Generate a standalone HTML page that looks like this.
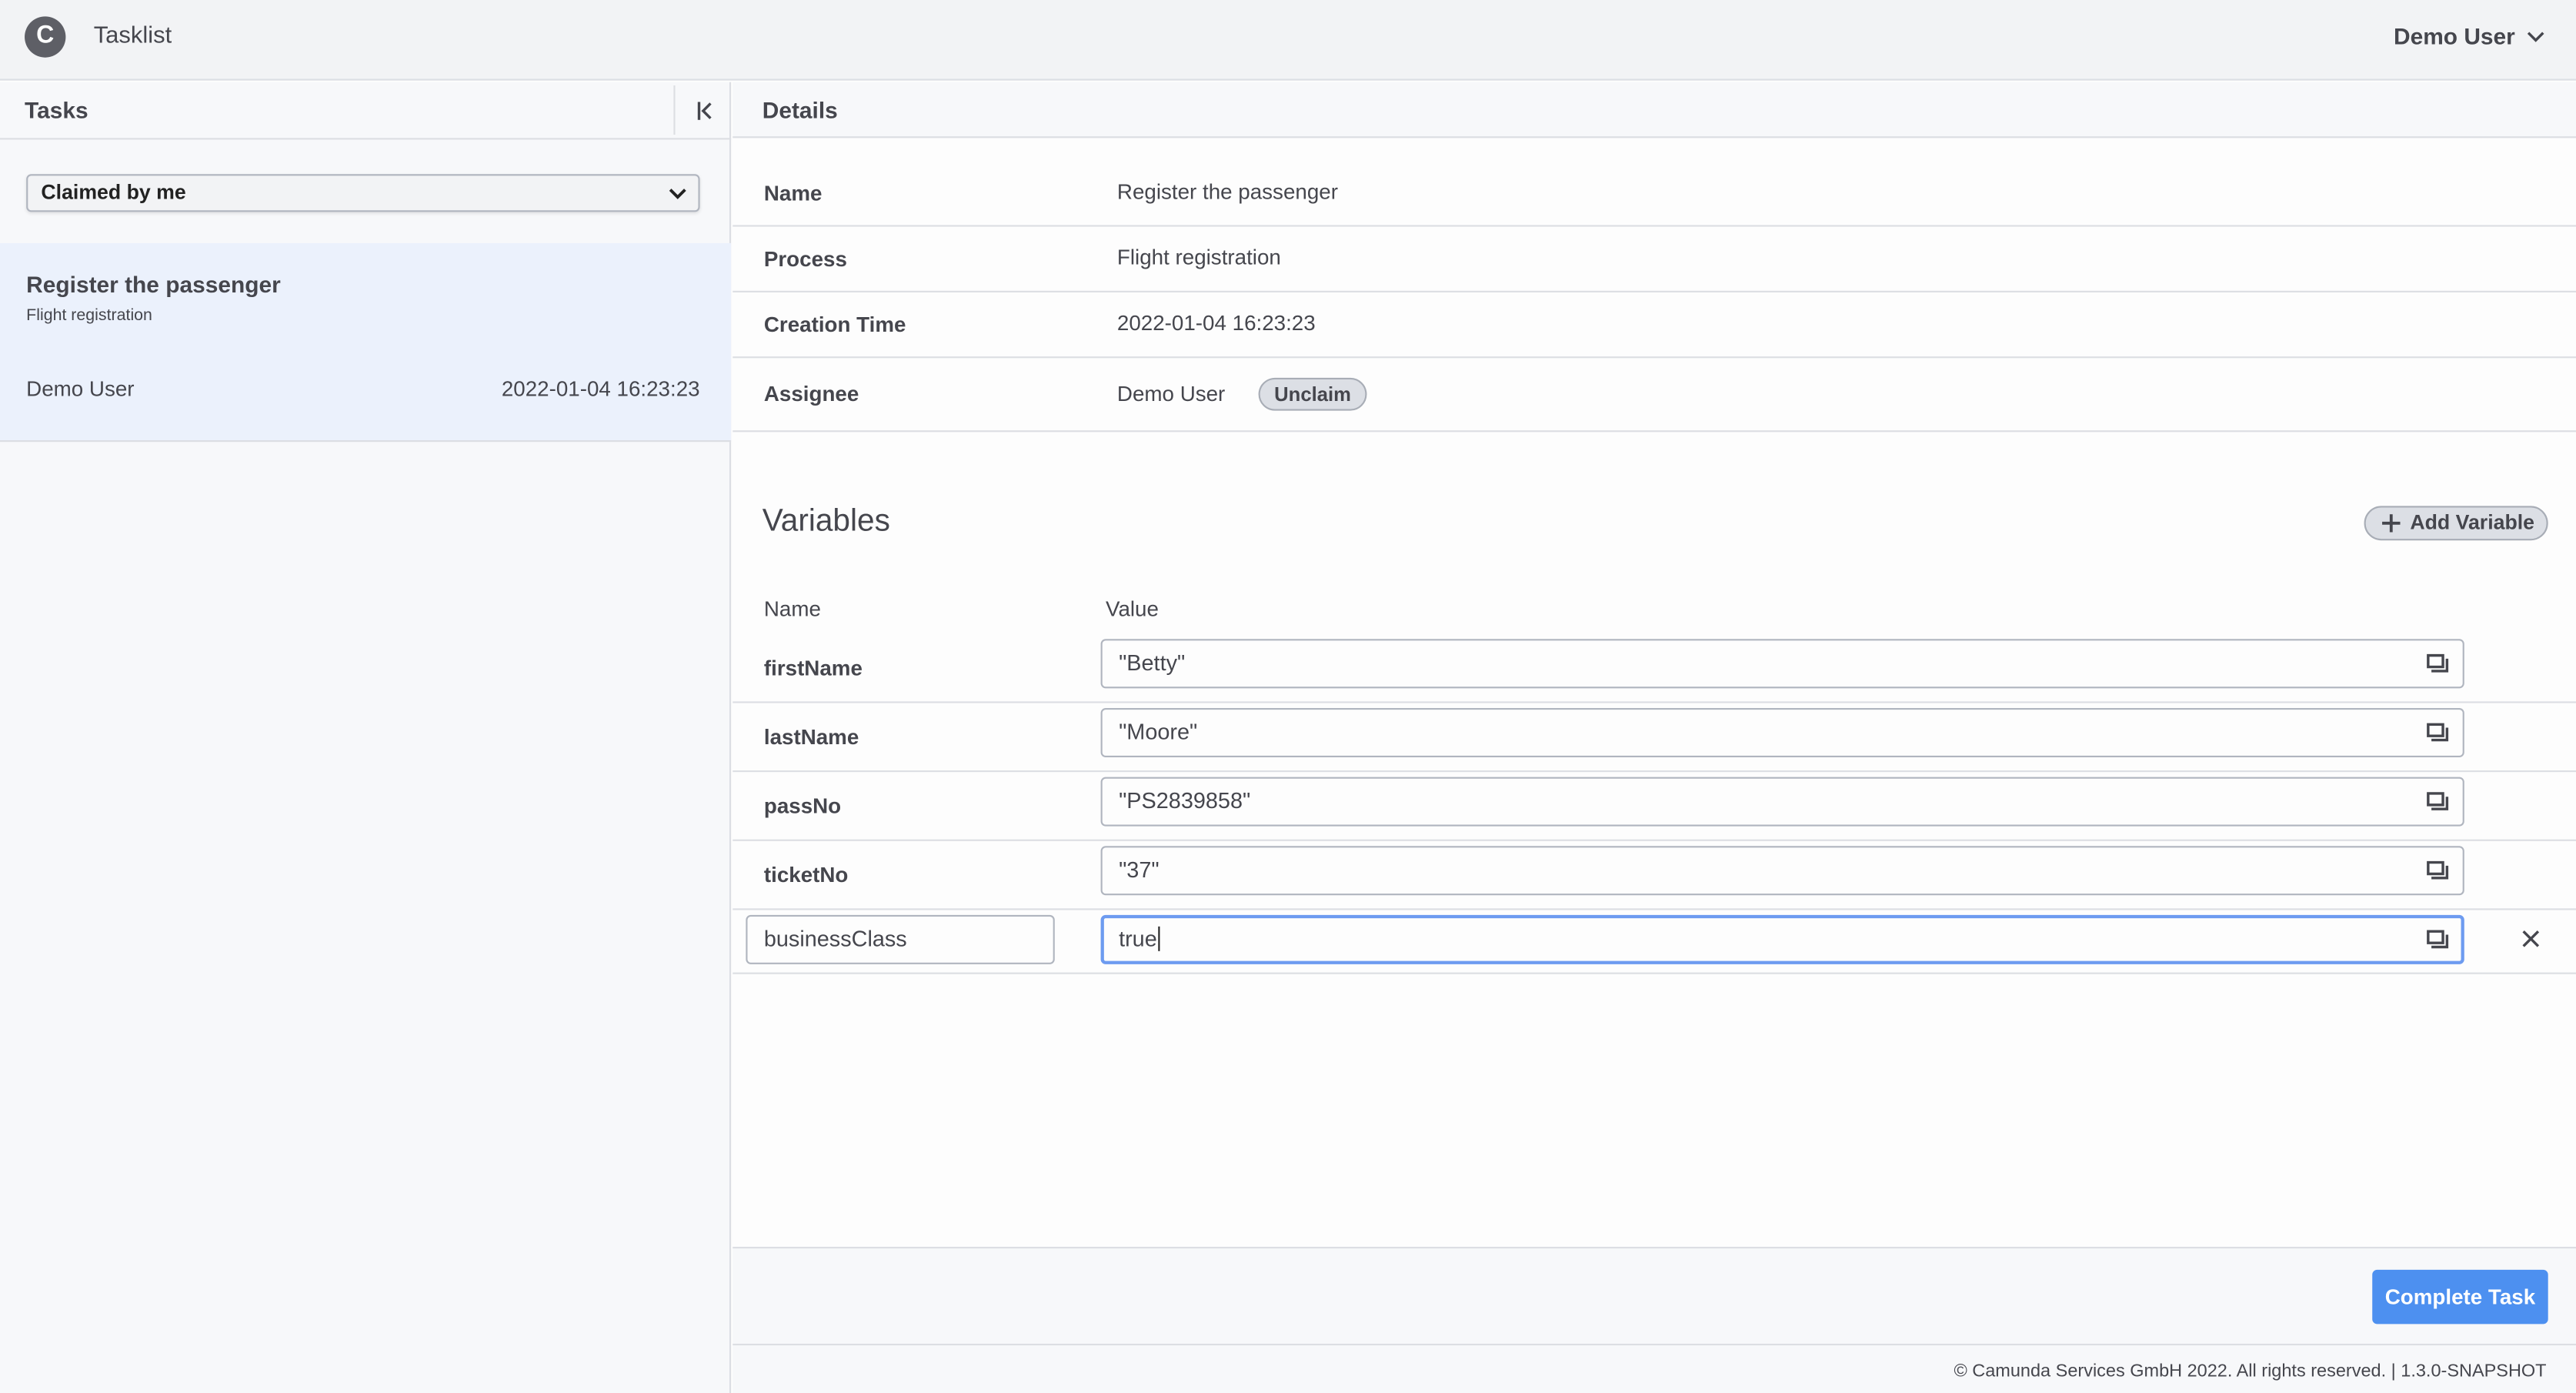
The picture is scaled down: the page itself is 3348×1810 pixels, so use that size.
<!DOCTYPE html>
<html><head><meta charset="utf-8"><style>
*{box-sizing:border-box;margin:0;padding:0}
html,body{width:3348px;height:1810px;overflow:hidden;background:#fdfdfd}
#w{width:1568px;height:848px;transform:scale(2.13520,2.13443);transform-origin:0 0;position:relative;font-family:"Liberation Sans",sans-serif;color:#45464d;font-size:13px}
.a{position:absolute}
.b{font-weight:bold}
.hl{position:absolute;left:446px;right:0;height:1px;background:#dcdee3}
.inp{position:absolute;left:670px;width:830px;height:30px;border:1px solid #b0b5bf;border-radius:3px;background:#fdfdfd;padding-left:10px;line-height:28px;font-size:13.5px}
.ic{position:absolute;right:8px;top:8px;width:14px;height:12px}
.vn{position:absolute;left:465px;font-weight:bold;font-size:13px}
</style></head><body><div id="w">
<div class="a" style="left:0;top:0;width:1568px;height:49px;background:#f2f3f5;border-bottom:1px solid #dcdee3"></div>
<div class="a" style="left:15px;top:10px;width:25px;height:25px;border-radius:50%;background:#5e5f66;color:#fff;font-weight:bold;font-size:15px;text-align:center;line-height:24px">C</div>
<div class="a" style="left:57px;top:14px;font-size:14.5px">Tasklist</div>
<div class="a b" style="left:1457px;top:14px;font-size:14px">Demo User</div>
<svg class="a" style="left:1538px;top:19px" width="11" height="8"><path d="M1 1l4.5 4.5L10 1" stroke="#45464d" stroke-width="1.6" fill="none"/></svg>
<div class="a" style="left:0;top:50px;width:445px;height:798px;background:#f7f8fa;border-right:1px solid #dcdee3"></div>
<div class="a" style="left:0;top:84px;width:445px;height:1px;background:#dcdee3"></div>
<div class="a b" style="left:15px;top:59px;font-size:14px">Tasks</div>
<div class="a" style="left:410px;top:52px;width:1px;height:30px;background:#dcdee3"></div>
<svg class="a" style="left:424px;top:62px" width="10" height="11"><path d="M1.5 0v11M8.5 1L4 5.5 8.5 10" stroke="#45464d" stroke-width="1.6" fill="none"/></svg>
<div class="a b" style="left:16px;top:106px;width:410px;height:23px;border:1px solid #b0b5bf;border-radius:3px;background:#f2f3f5;padding-left:8px;line-height:21px;font-size:12.5px;color:#222;box-shadow:0 1px 2px rgba(0,0,0,.1)">Claimed by me</div>
<svg class="a" style="left:407px;top:114px" width="11" height="8"><path d="M1 1.5l4.5 4.5L10 1.5" stroke="#222" stroke-width="1.8" fill="none"/></svg>
<div class="a" style="left:0;top:148px;width:445px;height:121px;background:#ebf1fc;border-bottom:1px solid #dcdee3"></div>
<div class="a b" style="left:16px;top:165px;font-size:14px">Register the passenger</div>
<div class="a" style="left:16px;top:187px;font-size:10px">Flight registration</div>
<div class="a" style="left:16px;top:229px;font-size:13px">Demo User</div>
<div class="a" style="right:1142px;top:229px;font-size:13px">2022-01-04 16:23:23</div>
<div class="a" style="left:446px;top:50px;width:1122px;height:34px;background:#f7f8fa;border-bottom:1px solid #dcdee3"></div>
<div class="a b" style="left:464px;top:59px;font-size:14px">Details</div>
<div class="a b" style="left:465px;top:110px">Name</div><div class="a" style="left:680px;top:109px">Register the passenger</div><div class="hl" style="top:137px"></div>
<div class="a b" style="left:465px;top:150px">Process</div><div class="a" style="left:680px;top:149px">Flight registration</div><div class="hl" style="top:177px"></div>
<div class="a b" style="left:465px;top:190px">Creation Time</div><div class="a" style="left:680px;top:189px">2022-01-04 16:23:23</div><div class="hl" style="top:217px"></div>
<div class="a b" style="left:465px;top:232px">Assignee</div><div class="a" style="left:680px;top:232px">Demo User</div>
<div class="a b" style="left:766px;top:230px;width:66px;height:20px;border:1px solid #a8adb6;border-radius:10px;background:#dcdfe5;text-align:center;line-height:18px;font-size:12px">Unclaim</div>
<div class="hl" style="top:262px"></div>
<div class="a" style="left:464px;top:307px;font-size:19px">Variables</div>
<div class="a b" style="left:1439px;top:308px;width:112px;height:21px;border:1px solid #a8adb6;border-radius:11px;background:#dcdfe5;line-height:19px;font-size:12.5px;padding-left:27px">Add Variable</div>
<svg class="a" style="left:1450px;top:313px" width="11" height="11"><path d="M5.5 0v11M0 5.5h11" stroke="#45464d" stroke-width="1.8"/></svg>
<div class="a" style="left:465px;top:363px">Name</div><div class="a" style="left:673px;top:363px">Value</div>
<div class="vn" style="top:399px">firstName</div><div class="inp" style="top:389px">"Betty"<svg class="ic" viewBox="0 0 14 12"><path d="M1 1h9v7H1zM3 10.5h9.5V3" stroke="#45464d" stroke-width="1.6" fill="none"/></svg></div><div class="hl" style="top:427px"></div>
<div class="vn" style="top:441px">lastName</div><div class="inp" style="top:431px">"Moore"<svg class="ic" viewBox="0 0 14 12"><path d="M1 1h9v7H1zM3 10.5h9.5V3" stroke="#45464d" stroke-width="1.6" fill="none"/></svg></div><div class="hl" style="top:469px"></div>
<div class="vn" style="top:483px">passNo</div><div class="inp" style="top:473px">"PS2839858"<svg class="ic" viewBox="0 0 14 12"><path d="M1 1h9v7H1zM3 10.5h9.5V3" stroke="#45464d" stroke-width="1.6" fill="none"/></svg></div><div class="hl" style="top:511px"></div>
<div class="vn" style="top:525px">ticketNo</div><div class="inp" style="top:515px">"37"<svg class="ic" viewBox="0 0 14 12"><path d="M1 1h9v7H1zM3 10.5h9.5V3" stroke="#45464d" stroke-width="1.6" fill="none"/></svg></div><div class="hl" style="top:553px"></div>
<div class="a" style="left:454px;top:557px;width:188px;height:30px;border:1px solid #b0b5bf;border-radius:3px;padding-left:10px;line-height:28px;font-size:13.5px">businessClass</div>
<div class="inp" style="top:557px;border:2px solid #6d9bf0;line-height:26px;padding-left:9px">true<span style="border-left:1px solid #222;margin-left:1px"></span><svg class="ic" style="right:7px;top:7px" viewBox="0 0 14 12"><path d="M1 1h9v7H1zM3 10.5h9.5V3" stroke="#45464d" stroke-width="1.6" fill="none"/></svg></div>
<svg class="a" style="left:1535px;top:566px" width="11" height="11"><path d="M1 1l9 9M10 1l-9 9" stroke="#45464d" stroke-width="1.6"/></svg>
<div class="hl" style="top:592px"></div>
<div class="a" style="left:446px;top:759px;width:1122px;height:89px;background:#f7f8fa;border-top:1px solid #dcdee3"></div>
<div class="a b" style="left:1444px;top:773px;width:107px;height:33px;background:#4d90f0;border-radius:3px;color:#fff;text-align:center;line-height:33px;font-size:13px">Complete Task</div>
<div class="hl" style="top:818px"></div>
<div class="a" style="right:18px;top:829px;font-size:11px">© Camunda Services GmbH 2022. All rights reserved. | 1.3.0-SNAPSHOT</div>
</div></body></html>
